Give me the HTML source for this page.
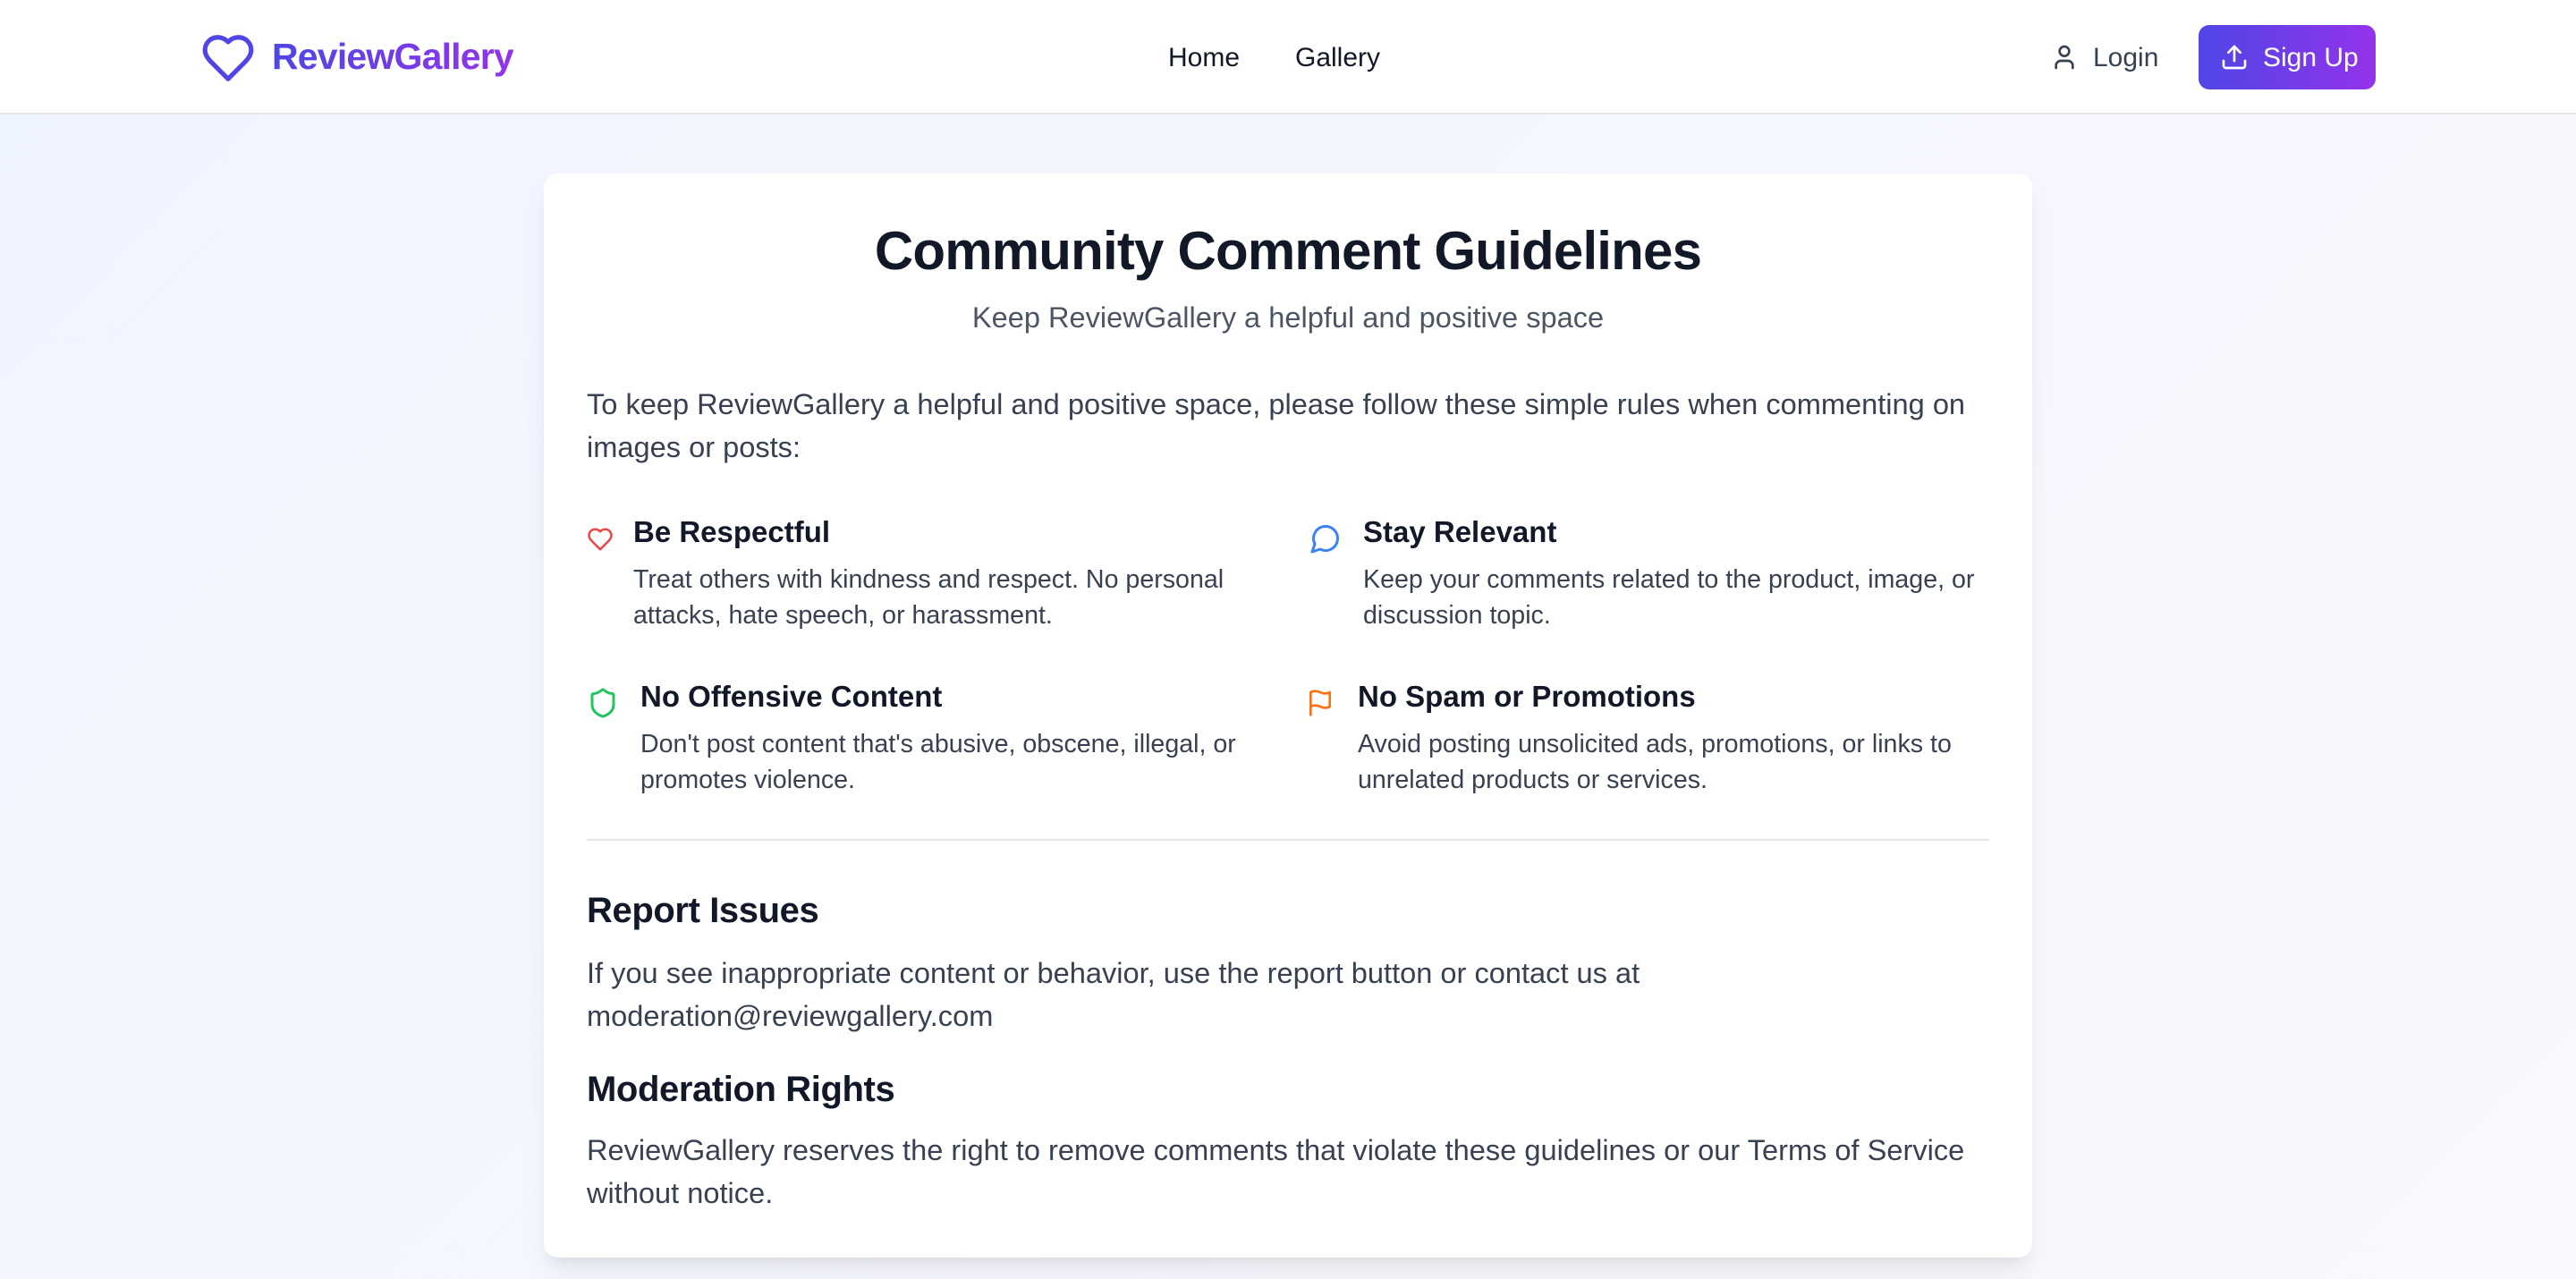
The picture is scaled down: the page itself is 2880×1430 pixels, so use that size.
<!DOCTYPE html>
<html><head><meta charset="utf-8"><style>
html{zoom:2}
*{box-sizing:border-box;margin:0;padding:0}
body{width:1440px;height:715px;overflow:hidden;font-family:"Liberation Sans",sans-serif;background:linear-gradient(135deg,#eef4ff 0%,#f5f7fe 50%,#faf7fe 100%);position:relative;color:#111827}
.hdr{position:absolute;left:0;top:0;width:1440px;height:64px;background:#fff;border-bottom:1px solid #e5e7eb}
.a{position:absolute;white-space:nowrap}
.logo{left:152px;top:20px;font-size:20.5px;font-weight:bold;background:linear-gradient(90deg,#4f46e5,#9333ea);-webkit-background-clip:text;color:transparent;letter-spacing:-0.4px}
.nav{font-size:15px;color:#111827;top:24px;font-weight:500}
.btn{left:1229px;top:14px;width:99px;height:36px;border-radius:6px;background:linear-gradient(90deg,#4f46e5,#9333ea);color:#fff;font-size:15px}
.card{position:absolute;left:304px;top:97px;width:832px;height:606px;background:#fff;border-radius:8px;box-shadow:0 10px 15px -3px rgba(0,0,0,.08),0 4px 6px -4px rgba(0,0,0,.08)}
.t{left:0;width:832px;text-align:center}
h1{font-size:30px;font-weight:bold;letter-spacing:-0.4px}
.sub{font-size:16.3px;color:#4b5563}
.p{font-size:16.3px;color:#374151;line-height:24px;left:24px}
.it{font-size:16.5px;font-weight:bold;color:#111827}
.d{font-size:14.3px;color:#374151;line-height:20px}
.h2{font-size:20px;font-weight:bold;left:24px;letter-spacing:-0.2px}
.hr{position:absolute;left:24px;top:372px;width:784px;height:1px;background:#e5e7eb}
svg{position:absolute}
</style></head><body>
<div class="hdr">
<svg style="left:112px;top:17px" width="31" height="31" viewBox="0 0 24 24" fill="none" stroke="#4f46e5" stroke-width="2" stroke-linecap="round" stroke-linejoin="round"><path d="M19 14c1.490-1.460 3-3.210 3-5.500A5.500 5.500 0 0 0 16.500 3c-1.760 0-3 .5-4.500 2-1.500-1.500-2.740-2-4.500-2A5.500 5.500 0 0 0 2 8.500c0 2.300 1.500 4.050 3 5.500l7 7Z"/></svg>
<div class="a logo">ReviewGallery</div>
<div class="a nav" style="left:653px">Home</div>
<div class="a nav" style="left:724px">Gallery</div>
<svg style="left:1146px;top:24px" width="16" height="16" viewBox="0 0 24 24" fill="none" stroke="#374151" stroke-width="2" stroke-linecap="round"><path d="M19 21v-2a4 4 0 0 0-4-4H9a4 4 0 0 0-4 4v2"/><circle cx="12" cy="7" r="4"/></svg>
<div class="a nav" style="left:1170px;color:#374151;font-weight:normal">Login</div>
<div class="a btn"><svg style="left:12px;top:10px" width="16" height="16" viewBox="0 0 24 24" fill="none" stroke="#fff" stroke-width="2" stroke-linecap="round" stroke-linejoin="round"><path d="M21 15v4a2 2 0 0 1-2 2H5a2 2 0 0 1-2-2v-4"/><path d="M17 8l-5-5-5 5"/><path d="M12 3v12"/></svg><span class="a" style="left:36px;top:10px">Sign Up</span></div>
</div>
<div class="card">
<h1 class="a t" style="top:26px">Community Comment Guidelines</h1>
<div class="a t sub" style="top:71px">Keep ReviewGallery a helpful and positive space</div>
<div class="a p" style="top:117px">To keep ReviewGallery a helpful and positive space, please follow these simple rules when commenting on<br>images or posts:</div>

<svg style="left:24px;top:197px" width="15" height="15" viewBox="0 0 24 24" fill="none" stroke="#ef4444" stroke-width="2" stroke-linejoin="round"><path d="M19 14c1.490-1.460 3-3.210 3-5.500A5.500 5.500 0 0 0 16.500 3c-1.760 0-3 .5-4.500 2-1.500-1.500-2.740-2-4.500-2A5.500 5.500 0 0 0 2 8.500c0 2.300 1.500 4.050 3 5.500l7 7Z"/></svg>
<div class="a it" style="left:50px;top:191px">Be Respectful</div>
<div class="a d" style="left:50px;top:217px">Treat others with kindness and respect. No personal<br>attacks, hate speech, or harassment.</div>

<svg style="left:428px;top:195px" width="18" height="18" viewBox="0 0 24 24" fill="none" stroke="#3b82f6" stroke-width="2" stroke-linejoin="round"><path d="M7.9 20A9 9 0 1 0 4 16.1L2 22Z"/></svg>
<div class="a it" style="left:458px;top:191px">Stay Relevant</div>
<div class="a d" style="left:458px;top:217px">Keep your comments related to the product, image, or<br>discussion topic.</div>

<svg style="left:24px;top:287px" width="18" height="18" viewBox="0 0 24 24" fill="none" stroke="#22c55e" stroke-width="2" stroke-linejoin="round"><path d="M20 13c0 5-3.500 7.500-7.660 8.950a1 1 0 0 1-.670-.010C7.500 20.500 4 18 4 13V6a1 1 0 0 1 1-1c2 0 4.500-1.200 6.240-2.720a1.170 1.170 0 0 1 1.520 0C14.510 3.810 17 5 19 5a1 1 0 0 1 1 1z"/></svg>
<div class="a it" style="left:54px;top:283px">No Offensive Content</div>
<div class="a d" style="left:54px;top:309px">Don't post content that's abusive, obscene, illegal, or<br>promotes violence.</div>

<svg style="left:426px;top:288px" width="16" height="16" viewBox="0 0 24 24" fill="none" stroke="#f97316" stroke-width="2" stroke-linejoin="round" stroke-linecap="round"><path d="M4 15s1-1 4-1 5 2 8 2 4-1 4-1V3s-1 1-4 1-5-2-8-2-4 1-4 1z"/><path d="M4 22V15"/></svg>
<div class="a it" style="left:455px;top:283px">No Spam or Promotions</div>
<div class="a d" style="left:455px;top:309px">Avoid posting unsolicited ads, promotions, or links to<br>unrelated products or services.</div>

<div class="hr"></div>
<div class="a h2" style="top:401px">Report Issues</div>
<div class="a p" style="top:435px">If you see inappropriate content or behavior, use the report button or contact us at<br>moderation@reviewgallery.com</div>
<div class="a h2" style="top:501px">Moderation Rights</div>
<div class="a p" style="top:534px">ReviewGallery reserves the right to remove comments that violate these guidelines or our Terms of Service<br>without notice.</div>
</div>
</body></html>
